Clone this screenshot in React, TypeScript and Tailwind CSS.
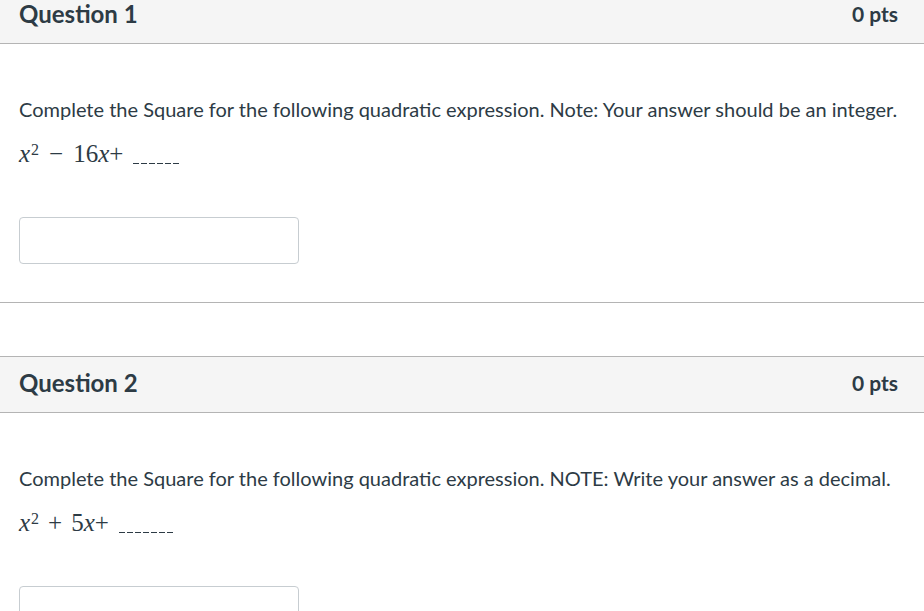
import React from "react";

function Blank({ n }: { n: number }) {
  return (
    <span className="inline-flex gap-[2px] ml-[10px] self-end mb-[5px]">
      {Array.from({ length: n }).map((_, i) => (
        <span key={i} className="block w-[6px] h-[1px] bg-[#2d3b45]" />
      ))}
    </span>
  );
}

function Question({
  title,
  text,
  math,
  first,
}: {
  title: string;
  text: string;
  math: React.ReactNode;
  first?: boolean;
}) {
  return (
    <div className={first ? "-mt-[12px]" : "border-t border-[#b4b4b4]"}>
      <div className="h-[56px] bg-[#f5f5f5] border-b border-[#b4b4b4] flex items-center justify-between pl-[19px] pr-[26px]">
        <span className="text-[24px] font-bold text-[#2d3b45] pb-[3px]">{title}</span>
        <span className="text-[21px] font-bold text-[#2d3b45] pb-[3px]">0 pts</span>
      </div>
      <div className="pl-[19px] pr-[20px] pt-[52px] pb-[38px]">
        <p className="text-[20px] leading-[26px] text-[#2d3b45] whitespace-nowrap">{text}</p>
        <div className="mt-[17px] h-[30px] flex items-center text-[25px] text-[#2d3b45] [font-family:'Liberation_Serif',serif]">
          {math}
        </div>
        <div className="mt-[48px] w-[280px] h-[47px] border border-[#c7cdd1] rounded-[4px] bg-white" />
      </div>
    </div>
  );
}

export default function App() {
  return (
    <div className="w-[924px] h-[611px] overflow-hidden bg-white [font-family:Lato,'Noto_Sans',sans-serif]">
      <div className="border-b border-[#b4b4b4]">
        <Question
          first
          title="Question 1"
          text="Complete the Square for the following quadratic expression. Note: Your answer should be an integer."
          math={
            <>
              <i>x</i>
              <sup className="text-[16px] relative -top-[4px] ml-[1px]">2</sup>
              <span className="mx-[10px]">−</span>
              <span>16</span>
              <i>x</i>
              <span>+</span>
              <Blank n={6} />
            </>
          }
        />
      </div>
      <div className="h-[53px]" />
      <Question
        title="Question 2"
        text="Complete the Square for the following quadratic expression. NOTE: Write your answer as a decimal."
        math={
          <>
            <i>x</i>
            <sup className="text-[16px] relative -top-[4px] ml-[1px]">2</sup>
            <span className="mx-[9px]">+</span>
            <span>5</span>
            <i>x</i>
            <span>+</span>
            <Blank n={7} />
          </>
        }
      />
    </div>
  );
}
